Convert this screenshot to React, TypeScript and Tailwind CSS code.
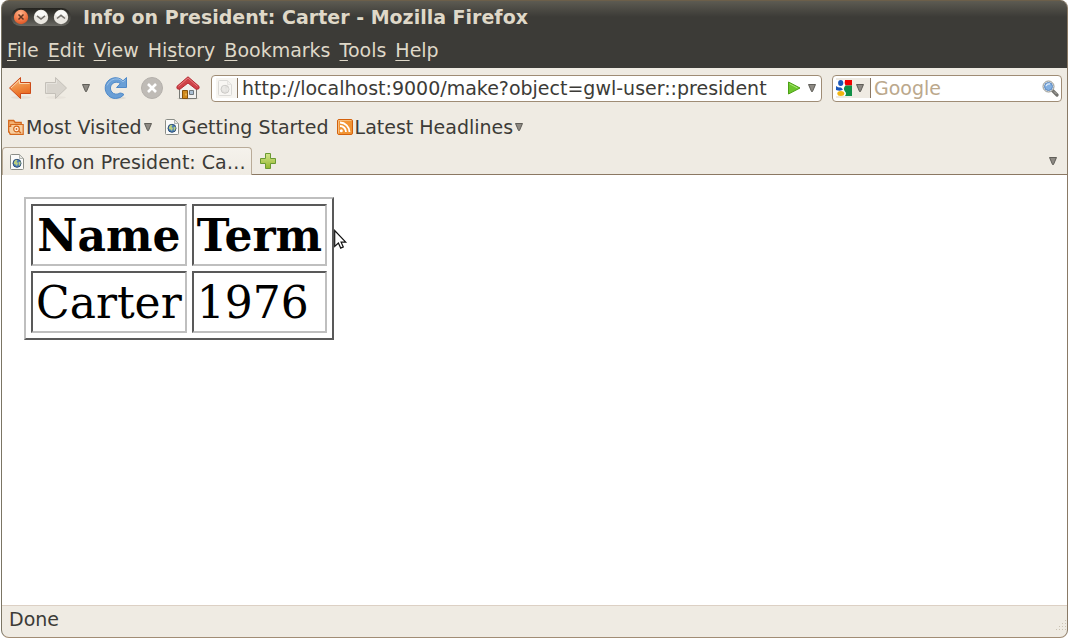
import React from "react";

const menus: [string, string, string][] = [
  ["", "F", "ile"],
  ["", "E", "dit"],
  ["", "V", "iew"],
  ["Hi", "s", "tory"],
  ["", "B", "ookmarks"],
  ["", "T", "ools"],
  ["", "H", "elp"],
];

const presidents = [{ name: "Carter", term: "1976" }];

function DownArrow() {
  return (
    <svg width="8" height="8" viewBox="0 0 8 8" className="shrink-0" aria-hidden="true">
      <path d="M.5.5h7L4.500 7.500h-1z" fill="#8e8a84" stroke="#55534e" strokeWidth=".9" />
    </svg>
  );
}

function PageIcon({ faded = false }: { faded?: boolean }) {
  return (
    <svg width="16" height="18" viewBox="0 0 16 18" className={faded ? "shrink-0 opacity-25 grayscale" : "shrink-0"} aria-hidden="true">
      <path d="M2.500 1.500h8l4 4v10q0 1-1 1h-11q-1 0-1-1v-13q0-1 1-1z" fill="#fbfbfa" stroke="#8b8d87" strokeLinejoin="round" />
      <path d="M10.500 1.500v4h4z" fill="#e6e6e3" stroke="#a5a7a1" strokeWidth=".8" />
      <circle cx="8" cy="10.300" r="4" fill={faded ? "#aaaaaa" : "#4a7fbc"} stroke="#2f4f74" />
      <path d="M5 9q1.500-2.700 3.500-2l-1 2 1.500 1-1 3-1.500-1.500L5 11zM9.500 9.300l2-.8v2.500l-1.500 2z" fill="#bccf7d" />
    </svg>
  );
}

function CloseGlyph() {
  return (
    <svg width="16" height="16" viewBox="0 0 16 16" aria-hidden="true">
      <defs>
        <radialGradient id="closeFill" cx=".45" cy=".25" r=".8">
          <stop offset="0" stopColor="#ffb58c" />
          <stop offset=".6" stopColor="#f07746" />
          <stop offset="1" stopColor="#d9501e" />
        </radialGradient>
      </defs>
      <circle cx="8" cy="8" r="7.200" fill="url(#closeFill)" />
      <path d="M5.500 5.500l5 5m0-5l-5 5" stroke="#5f3522" strokeWidth="1.500" />
    </svg>
  );
}

function RoundGlyph({ up = false }: { up?: boolean }) {
  return (
    <svg width="16" height="16" viewBox="0 0 16 16" aria-hidden="true">
      <circle cx="8" cy="8" r="7.200" fill="#e9e6e0" />
      <path d="M2 6a6.300 6.300 0 0 1 12 0q-6 3-12 0z" fill="#fafaf8" />
      <path d={up ? "M4 9.500L8 6.300l4 3.200" : "M4 6.800L8 10l4-3.200"} fill="none" stroke="#73706b" strokeWidth="1.500" />
    </svg>
  );
}

function BackIcon() {
  return (
    <svg width="24" height="24" viewBox="0 0 24 24" aria-hidden="true">
      <defs>
        <linearGradient id="backFill" x1="0" y1="0" x2=".3" y2="1">
          <stop offset="0" stopColor="#f8c08a" />
          <stop offset=".5" stopColor="#f09248" />
          <stop offset="1" stopColor="#e8641c" />
        </linearGradient>
      </defs>
      <ellipse cx="13" cy="21.500" rx="10" ry="1.500" fill="#e3ded5" />
      <path d="M1.500 12L12.500 1.500v5h10v11h-10v5z" fill="url(#backFill)" stroke="#cc4a18" strokeLinejoin="round" />
      <path d="M3 12l8.500-8v3.500h10" fill="none" stroke="#fbd5ae" />
    </svg>
  );
}

function ForwardIcon() {
  return (
    <svg width="24" height="24" viewBox="0 0 24 24" aria-hidden="true">
      <ellipse cx="12" cy="21.500" rx="10" ry="1.500" fill="#e8e3db" />
      <path d="M22.500 12L11.500 1.500v5h-10v11h10v5z" fill="#d8d4cd" stroke="#c4c0b9" strokeLinejoin="round" />
      <path d="M2.500 16.500v-9h10V4" fill="none" stroke="#e5e2dc" />
    </svg>
  );
}

function ReloadIcon() {
  return (
    <svg width="24" height="24" viewBox="0 0 24 24" aria-hidden="true">
      <ellipse cx="13" cy="22" rx="9" ry="1.500" fill="#e0dcd4" />
      <path
        d="M22.500 1.500V11.500H12.500l3.800-3.900A6 6 0 1 0 16 17q2 0 4 1.500-3 4-8.500 4A10.400 10.400 0 1 1 19 4.800z"
        fill="#6a9fd6"
        stroke="#4f89c8"
        strokeLinejoin="round"
      />
      <path d="M3 9.500q3.500-7.500 11.500-6.500 3 .7 4.500 2.800l2.500-2" fill="none" stroke="#9cc1e7" />
    </svg>
  );
}

function StopIcon() {
  return (
    <svg width="24" height="24" viewBox="0 0 24 24" aria-hidden="true">
      <circle cx="12" cy="12" r="10.500" fill="#bfbbb6" stroke="#b4b0ab" />
      <path d="M8 8l8 8m0-8l-8 8" stroke="#fff" strokeWidth="2.600" />
    </svg>
  );
}

function HomeIcon() {
  return (
    <svg width="24" height="24" viewBox="0 0 24 24" aria-hidden="true">
      <ellipse cx="12" cy="22.500" rx="11" ry="1.200" fill="#d7d2c8" />
      <path d="M3.500 11.500L12 4.500l8.500 7v11h-17z" fill="#f0f0ee" stroke="#777873" />
      <path
        d="M12 .8L1 10.300q-.5 1.500.5 2.700l2.500.2L12 7l8 6.200 2.500-.2q1-1.200.5-2.700z"
        fill="#cf4249"
        stroke="#b52a33"
        strokeLinejoin="round"
      />
      <path d="M2.500 10.300L12 2l9.500 8.300" fill="none" stroke="#e77c80" />
      <path d="M6.500 14.500h5v8h-5z" fill="#d08a1c" stroke="#85520b" />
      <path d="M13.500 14.500h4v4h-4z" fill="#a9bfd3" stroke="#6d767c" />
      <path d="M10 17.500v2" stroke="#f5d27b" />
    </svg>
  );
}

function FolderIcon() {
  return (
    <svg width="16" height="16" viewBox="0 0 16 16" className="shrink-0" aria-hidden="true">
      <path d="M.7 13.500V1.500h5l1.500 2h6v2" fill="#f3b274" stroke="#d4681c" strokeWidth="1.300" />
      <path d="M2.700 5.500h12.500v9.800H2.200L.7 12V7.500h2z" fill="#f8cfa1" stroke="#d4681c" strokeWidth="1.200" />
      <circle cx="8.500" cy="10" r="2.800" fill="#fff1df" stroke="#d4681c" strokeWidth="1.200" />
      <circle cx="8.500" cy="10" r=".9" fill="#d4681c" />
      <path d="M10.500 12l2.500 2" stroke="#d4681c" strokeWidth="1.400" />
    </svg>
  );
}

function FeedIcon() {
  return (
    <svg width="16" height="16" viewBox="0 0 16 16" className="shrink-0" aria-hidden="true">
      <rect x=".5" y=".5" width="15" height="15" rx="1.500" fill="#f19434" stroke="#d3610c" />
      <path d="M1.500 14.500v-13h13" fill="none" stroke="#f7bd7e" />
      <circle cx="4.300" cy="11.800" r="1.500" fill="#fff" />
      <path d="M3 7a6 6 0 0 1 6 6M3 3.500A9.500 9.500 0 0 1 12.500 13" fill="none" stroke="#fff" strokeWidth="1.800" />
    </svg>
  );
}

function PlusIcon() {
  return (
    <svg width="16" height="16" viewBox="0 0 16 16" aria-hidden="true">
      <defs>
        <linearGradient id="plusFill" x1="0" y1="0" x2="0" y2="1">
          <stop offset="0" stopColor="#d3e58c" />
          <stop offset="1" stopColor="#93b62c" />
        </linearGradient>
      </defs>
      <path d="M5.500.5h5v5h5v5h-5v5h-5v-5h-5v-5h5z" fill="url(#plusFill)" stroke="#6a9a32" />
    </svg>
  );
}

function GoIcon() {
  return (
    <svg width="14" height="14" viewBox="0 0 14 14" aria-hidden="true">
      <path d="M1.500 1L13 7 1.500 13z" fill="#6cc62c" stroke="#4ca015" strokeLinejoin="round" />
      <path d="M2.500 2.800L10.500 7" stroke="#a9e675" />
    </svg>
  );
}

function GoogleIcon() {
  return (
    <svg width="16" height="16" viewBox="0 0 16 16" className="shrink-0" aria-hidden="true">
      <path d="M0 0h16v16H0z" fill="#fff" />
      <path d="M9 0h7v5.500H9.500Q8 3 9 0z" fill="#f00000" />
      <path d="M16 5.500V16H9q2-2.500 0-4.500-2.500-3 .5-6z" fill="#109048" />
      <path d="M0 6q2.500 2 5 1.500l2 2Q5 11.500 0 10z" fill="#1c57b8" />
      <ellipse cx="4.700" cy="3" rx="2.600" ry="3" fill="#1c57b8" />
      <ellipse cx="4.800" cy="13.400" rx="3.500" ry="2.500" fill="#f2b511" />
    </svg>
  );
}

function SearchIcon() {
  return (
    <svg width="17" height="17" viewBox="0 0 17 17" aria-hidden="true">
      <path d="M10.500 10.500l4.500 4.500" stroke="#73736f" strokeWidth="3.200" strokeLinecap="round" />
      <path d="M12 11.500l2.500 2.500" stroke="#b0b0ac" />
      <circle cx="6.500" cy="6.500" r="5.500" fill="#f5f5f3" stroke="#90928d" />
      <circle cx="6.500" cy="6.500" r="4" fill="#83b0e2" stroke="#5a86bd" />
      <path d="M4 6q1-2.500 4-2" fill="none" stroke="#d7e8fa" strokeWidth="1.300" />
    </svg>
  );
}

function Pointer() {
  return (
    <svg width="14" height="21" viewBox="0 0 14 21" className="absolute top-8 left-full" aria-hidden="true">
      <path d="M.7 1.500v16l3.700-3.400 2.300 5 2.600-1.200-2.200-4.700h4.600z" fill="#fff" stroke="#111" strokeWidth="1.200" />
    </svg>
  );
}

function ResizeGrip() {
  return (
    <svg width="12" height="12" viewBox="0 0 12 12" aria-hidden="true">
      <path d="M10 1.500h1M7 4.500h1m2 0h1M4 7.500h1m2 0h1m2 0h1M1 10.500h1m2 0h1m2 0h1m2 0h1" stroke="#cbc3b4" />
    </svg>
  );
}

const sunken =
  "border-2 border-t-[#595959] border-l-[#595959] border-r-[#bfbfbf] border-b-[#bfbfbf] px-[3px] pt-1 pb-0.5";

export default function App() {
  return (
    <div className="flex min-h-screen flex-col bg-white pr-0.5 pb-0.5 pl-px font-['DejaVu_Sans',sans-serif] text-[19px] leading-6 text-[#3c3b37]">
      <div className="flex grow flex-col overflow-hidden rounded-[8px] border border-t-[#6c5f4a] border-r-[#8a7a66] border-b-[#a18c74] border-l-[#7b7564] bg-[#efebe3]">
        <header className="bg-[#3c3b37] text-[#dfd8c8]">
          <div className="flex h-8 items-center gap-3 bg-linear-to-b from-[#5d5b52] to-[#3c3b37] to-50% pl-[9px]">
            <div className="flex h-[18px] items-center gap-1 rounded-full bg-linear-to-b from-[#24231f] to-[#6a6963] px-0.5">
              <button type="button" aria-label="Close"><CloseGlyph /></button>
              <button type="button" aria-label="Minimize"><RoundGlyph /></button>
              <button type="button" aria-label="Maximize"><RoundGlyph up /></button>
            </div>
            <h1 className="truncate font-bold">Info on President: Carter - Mozilla Firefox</h1>
          </div>
          <nav className="flex h-[35px] items-center gap-[9px] pb-0.5 pl-[5px]">
            {menus.map(([before, key, after]) => (
              <button type="button" key={before + key + after}>
                {before}
                <span className="underline decoration-1 underline-offset-[3px]">{key}</span>
                {after}
              </button>
            ))}
          </nav>
        </header>

        <div className="flex h-10 items-center pr-[5px] pl-1.5">
          <div className="flex items-center gap-3">
            <button type="button" aria-label="Back"><BackIcon /></button>
            <button type="button" aria-label="Forward"><ForwardIcon /></button>
          </div>
          <button type="button" aria-label="Recent pages" className="px-[14px]"><DownArrow /></button>
          <div className="flex items-center gap-3">
            <button type="button" aria-label="Reload"><ReloadIcon /></button>
            <button type="button" aria-label="Stop"><StopIcon /></button>
            <button type="button" aria-label="Home"><HomeIcon /></button>
          </div>
          <form className="ml-[11px] flex h-[27px] grow items-center rounded-[4px] border border-[#9f8c75] bg-white pr-[5px] pl-1" onSubmit={(e) => e.preventDefault()}>
            <span className="flex h-5 items-center border-r border-[#8b7863] bg-[#f7f5f1] pr-1 pl-px">
              <PageIcon faded />
            </span>
            <input
              aria-label="Address"
              type="text"
              defaultValue="http://localhost:9000/make?object=gwl-user::president"
              className="ml-1 min-w-0 grow bg-transparent outline-none"
            />
            <button type="submit" aria-label="Go" className="mr-[7px]"><GoIcon /></button>
            <button type="button" aria-label="Address history"><DownArrow /></button>
          </form>
          <form className="ml-[10px] flex h-[27px] w-[230px] items-center rounded-[4px] border border-[#9f8c75] bg-white pr-0.5 pl-[3px]" onSubmit={(e) => e.preventDefault()}>
            <button type="button" aria-label="Search engine" className="flex h-5 items-center gap-1 border-r border-[#8b7863] bg-[#efebe3] pr-[6px]">
              <GoogleIcon />
              <DownArrow />
            </button>
            <input aria-label="Search" type="text" placeholder="Google" className="ml-[3px] min-w-0 grow bg-transparent outline-none placeholder:text-[#bba88c]" />
            <button type="submit" aria-label="Search"><SearchIcon /></button>
          </form>
        </div>

        <nav className="flex h-[39px] items-center pb-0.5 pl-1.5">
          <button type="button" className="flex items-center gap-0.5">
            <FolderIcon />
            Most Visited
            <DownArrow />
          </button>
          <a href="#started" className="ml-3 flex items-center gap-0.5">
            <PageIcon />
            Getting Started
          </a>
          <button type="button" className="ml-2 flex items-center gap-0.5">
            <FeedIcon />
            Latest Headlines
            <DownArrow />
          </button>
        </nav>

        <div className="flex h-7 items-stretch justify-between border-b border-[#8b7863]">
          <div className="flex">
            <button type="button" className="-mb-px flex w-[250px] items-center gap-1 rounded-t-[4px] border border-b-0 border-[#b9ab98] bg-linear-to-b from-[#f5f2ec] to-[#efebe3] pl-1.5 whitespace-nowrap">
              <PageIcon />
              Info on President: Ca…
            </button>
            <button type="button" aria-label="New tab" className="ml-2"><PlusIcon /></button>
          </div>
          <button type="button" aria-label="List all tabs" className="mr-[10px]"><DownArrow /></button>
        </div>

        <main className="grow bg-white px-[22px] pt-[22px]">
          <div className="relative w-fit">
            <table className="border-separate border-spacing-[5px] border-2 border-t-[#bfbfbf] border-r-[#595959] border-b-[#595959] border-l-[#bfbfbf] font-['DejaVu_Serif',serif] text-[44px] leading-[52px] text-black">
              <thead>
                <tr>
                  <th className={sunken}>Name</th>
                  <th className={sunken}>Term</th>
                </tr>
              </thead>
              <tbody>
                {presidents.map((p) => (
                  <tr key={p.name}>
                    <td className={sunken}>{p.name}</td>
                    <td className={sunken}>{p.term}</td>
                  </tr>
                ))}
              </tbody>
            </table>
            <Pointer />
          </div>
        </main>

        <footer className="flex h-8 items-center justify-between border-t border-[#dcd0c4] pb-[6px] pl-[7px]">
          <span>Done</span>
          <span className="self-end"><ResizeGrip /></span>
        </footer>
      </div>
    </div>
  );
}
